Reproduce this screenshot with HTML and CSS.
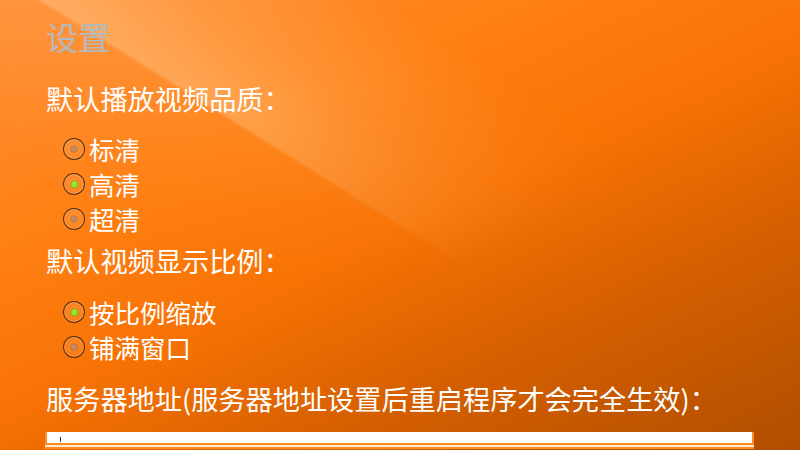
FILE: index.html
```html
<!DOCTYPE html>
<html lang="zh-CN">
<head>
<meta charset="utf-8">
<title>设置</title>
<link rel="stylesheet" href="styles.css">
</head>
<body>
<div class="glow"></div>
<div class="page">
  <div class="title">设置</div>

  <div class="label">默认播放视频品质：</div>
  <div class="group group-first">
    <div class="option"><span class="radio"></span><span class="opt-text">标清</span></div>
    <div class="option"><span class="radio checked"></span><span class="opt-text">高清</span></div>
    <div class="option"><span class="radio"></span><span class="opt-text">超清</span></div>
  </div>

  <div class="label label-ratio">默认视频显示比例：</div>
  <div class="group group-second">
    <div class="option"><span class="radio checked"></span><span class="opt-text">按比例缩放</span></div>
    <div class="option"><span class="radio"></span><span class="opt-text">铺满窗口</span></div>
  </div>

  <div class="label label-server">服务器地址(服务器地址设置后重启程序才会完全生效)：</div>
  <div class="field"><span class="caret"></span></div>
</div>
</body>
</html>
```
FILE: styles.css
```css
html, body {
  margin: 0;
  padding: 0;
  height: 100%;
  overflow: hidden;
}

body {
  position: relative;
  font-family: "Noto Sans CJK SC", "Noto Sans", sans-serif;
  color: #ffffff;
  background:
    linear-gradient(155deg,
      #ff9038 0%,
      #ff8014 30%,
      #f87305 50%,
      #d55f00 72%,
      #b04e00 100%);
}

/* soft diagonal light streak in the upper-left of the backdrop */
.glow {
  position: absolute;
  inset: 0;
  background:
    linear-gradient(32deg,
      rgba(255, 235, 200, 0) 49.6%,
      rgba(255, 225, 180, 0.36) 50.2%,
      rgba(255, 220, 170, 0.18) 60%,
      rgba(255, 220, 170, 0) 73%),
    linear-gradient(32deg,
      rgba(255, 200, 140, 0) 30%,
      rgba(255, 200, 140, 0.10) 49.6%,
      rgba(255, 200, 140, 0) 49.8%);
  -webkit-mask-image: radial-gradient(ellipse 520px 300px at 230px 0px, #000 35%, transparent 100%);
  mask-image: radial-gradient(ellipse 520px 300px at 230px 0px, #000 35%, transparent 100%);
  pointer-events: none;
}

.page {
  position: relative;
  z-index: 1;
  display: flex;
  flex-direction: column;
  padding: 16px 0 0 46px;
}

.title {
  font-size: 32px;
  line-height: 40px;
  height: 40px;
  color: #b4b9be;
  margin-bottom: 24px;
}

.label {
  font-size: 27.2px;
  line-height: 36px;
  height: 36px;
  white-space: nowrap;
}

.label-ratio {
  margin-top: 6px;
}

.label-server {
  margin-top: 16px;
}

.group {
  display: flex;
  flex-direction: column;
  padding-left: 17px;
}

.group-first {
  margin-top: 15px;
}

.group-second {
  margin-top: 16px;
}

.option {
  display: flex;
  align-items: center;
  gap: 4px;
  height: 35px;
  font-size: 25.5px;
  line-height: 35px;
}

.opt-text {
  display: block;
  height: 35px;
}

.radio {
  flex: none;
  width: 22px;
  height: 22px;
  box-sizing: border-box;
  border-radius: 50%;
  border: 1.5px solid rgba(70, 40, 20, 0.9);
  box-shadow: inset 0 0 0 1px rgba(255, 190, 130, 0.55);
  background: radial-gradient(circle at 50% 45%, rgba(255, 190, 130, 0.35), rgba(255, 150, 70, 0.1) 70%);
  display: flex;
  align-items: center;
  justify-content: center;
  margin-top: 1px;
}

.radio::after {
  content: "";
  width: 6px;
  height: 6px;
  border-radius: 50%;
  background: #c58a66;
  box-shadow: 0 0 0 0.5px rgba(120, 70, 40, 0.6);
}

.radio.checked::after {
  width: 7px;
  height: 7px;
  background: radial-gradient(circle at 45% 40%, #a6ee3a, #72c81a);
  box-shadow: 0 0 0 0.5px rgba(70, 120, 10, 0.7);
}

.field {
  margin-top: 16px;
  margin-left: -1px;
  width: 692px;
  height: 11px;
  box-sizing: content-box;
  background: #ffffff;
  border-left: 2px solid #ff8c1e;
  border-right: 2px solid #ff8c1e;
  border-bottom: 2px solid #ff8c1e;
  box-shadow: 0 2px 0 #ffe8d2, 0 4px 0 #ff8c1e;
  display: flex;
  align-items: center;
  padding-left: 13px;
}

.caret {
  width: 1px;
  height: 5px;
  background: #333333;
  margin-top: 3px;
}
```
